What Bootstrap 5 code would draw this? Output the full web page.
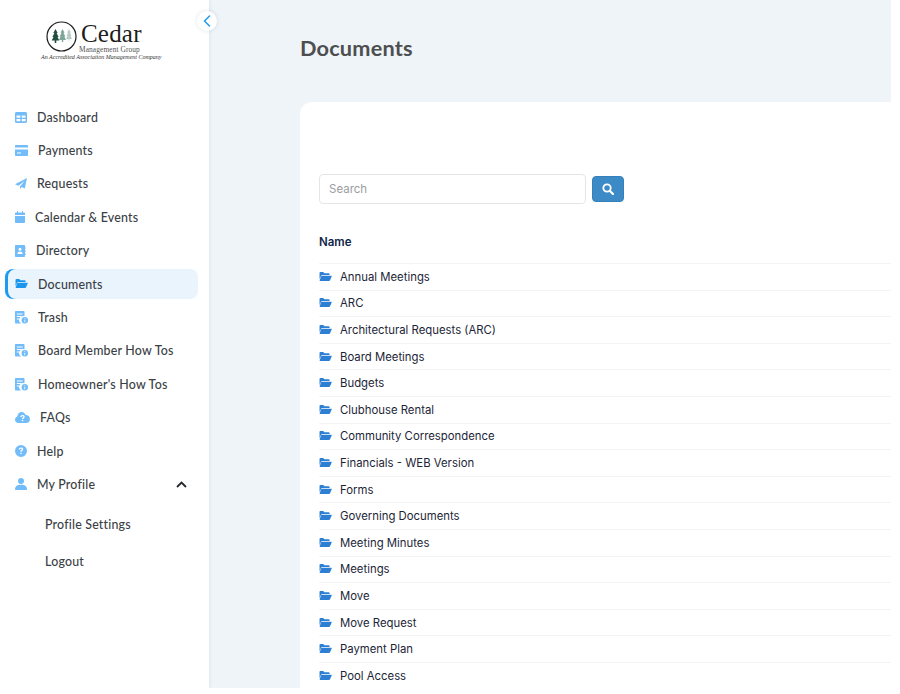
<!DOCTYPE html>
<html lang="en">
<head>
    <meta charset="UTF-8">
    <title>Documents</title>
    <link href="https://cdn.jsdelivr.net/npm/bootstrap@5.3.0/dist/css/bootstrap.min.css" rel="stylesheet">
    <style>
        body { background: #fff; overflow: hidden; font-family: "Inter", sans-serif; }
        .shell { width: 891px; height: 688px; overflow: hidden; background: #eff4f8; }
        .side { width: 209px; flex: none; background: #fff; box-shadow: 1px 0 3px rgba(40, 70, 100, .08); position: relative; font-family: "Lato", sans-serif; }
        .toggle { position: absolute; left: 197px; top: 11px; width: 20px; height: 20px; background: #fff; box-shadow: 0 0 4px rgba(40, 70, 100, .15); }
        .brand { height: 102px; padding: 21px 0 0 46px; }
        .brand-name { font: 25px/16px "Liberation Serif", serif; color: #1d1d1b; letter-spacing: .2px; margin-bottom: 5px; }
        .brand-sub { font: 7.4px/7px "Liberation Serif", serif; color: #555; margin: -6.500px 0 0 33px; letter-spacing: .1px; }
        .brand-tag { font: italic 6px/9px "Liberation Serif", serif; color: #333; white-space: nowrap; margin-left: -5px; }
        .side-nav { padding: 0 11px 0 5px; }
        .side-link { height: 30px; margin-bottom: 3.4px; padding-left: 10px; gap: 10px; color: #3b3f46; font-size: 12.4px; font-weight: 500; letter-spacing: .2px; text-decoration: none; border-radius: 8px; }
        .side-link span { padding-top: 2px; }
        .side-link svg { fill: #72bdf9; flex: none; }
        .side-link.active { background: #e9f4fd; box-shadow: inset 3px 0 0 #1c9af0; }
        .side-link.active svg { fill: #1a96ee; }
        .side-link .caret { margin-right: 11px; }
        .side-sub { height: 37px; padding-left: 40px; color: #3b3f46; font-size: 12.4px; font-weight: 500; letter-spacing: .2px; }
        .side-sub.first { margin-top: 8px; }
        .main { padding: 37px 0 0 91px; min-width: 0; }
        .page-title { font: 700 21.7px/22px "Lato", sans-serif; color: #4d4e50; margin: 0 0 43px; letter-spacing: .2px; }
        .doc-card { background: #fff; border-top-left-radius: 12px; height: 586px; padding: 72px 0 0 19px; }
        .search-box { width: 267px; height: 30px; font-size: 11.5px; border-color: #e3e6e9; border-radius: 4px; padding: 0 9px; }
        .search-box::placeholder { color: #9a9da1; }
        .search-btn { width: 32px; height: 26px; background: #3d8bc6; border: 1px solid #3580ba; border-radius: 4px; padding: 0; margin-left: 6px; }
        .search-btn:hover { background: #3d8bc6; }
        .doc-head { font-size: 11.5px; font-weight: 600; color: #0f2547; padding: 29px 0 12px; border-bottom: 1px solid #f3f4f6; line-height: 18px; }
        .doc-row { height: 26.6px; gap: 8px; padding-top: 1px; font-size: 11.35px; color: #1c2537; border-bottom: 1px solid #f3f4f6; }
        .doc-row svg { fill: #2c7fd3; flex: none; margin-top: -2px; }
    </style>
</head>
<body>
    <svg width="0" height="0" class="d-block">
        <symbol id="i-folder" viewBox="0 0 24 19"><path d="M1 2.500C1 1.700 1.700 1 2.500 1h5.300l2.200 2.300h8c.9 0 1.500.6 1.500 1.500V6.500H6.200c-1.100 0-2 .6-2.400 1.600L1 14.500z"/><path d="M5.400 8h17c.9 0 1.400.8 1 1.600l-3 7c-.3.800-1 1.400-2 1.400H2.300c-.9 0-1.400-.8-1-1.600l2.400-7C4 8.600 4.600 8 5.400 8z"/></symbol>
        <symbol id="i-doc" viewBox="0 0 13 13"><path d="M1 0h7.500c.6 0 1 .4 1 1v4.300A4 4 0 0 0 6.100 12.500H1c-.6 0-1-.4-1-1V1c0-.6.400-1 1-1z"/><circle cx="9.800" cy="9.300" r="3.200"/><path fill="#fff" d="M1.800 2.500h5.800v1H1.800zM1.800 5h4.500v1H1.800zM1.800 7.500h2.800v1H1.800zM9.400 8.800h.8v2.500h-.8zM9.400 7.300h.8v.8h-.8z"/></symbol>
    </svg>

    <div class="shell d-flex">
        <aside class="side">
            <button class="toggle btn rounded-circle border-0 p-0 d-flex align-items-center justify-content-center" type="button" aria-label="Collapse">
                <svg width="8" height="12" viewBox="0 0 8 12" fill="none" stroke="#1c9af0" stroke-width="1.500" stroke-linecap="round" stroke-linejoin="round"><path d="M6.500 1 1.500 6l5 5"/></svg>
            </button>
            <div class="brand">
                <div class="d-flex align-items-center gap-1">
                    <svg width="31" height="31" viewBox="0 0 31 31">
                        <circle cx="15.500" cy="15.500" r="14.500" fill="#fff" stroke="#1d1d1b" stroke-width="1.200"/>
                        <path fill="#b9cdc6" d="M23 8l1.800 3.500h-.9l1.600 3.200h-1l1.500 3.300h-2.500v1.500h-1v-1.500h-2.500l1.500-3.300h-1l1.600-3.200h-.9z"/>
                        <path fill="#7ea597" d="M16.500 8l2 3.800h-1l1.800 3.600h-1l1.700 3.600h-2.800v2h-1.400v-2h-2.800l1.700-3.600h-1l1.800-3.600h-1z"/>
                        <path fill="#234f3f" d="M9.500 8l2.200 4h-1.100l2 4h-1.100l1.800 3.500h-3v2.500h-1.600v-2.500h-3l1.800-3.500H6.400l2-4H7.300z"/>
                    </svg>
                    <span class="brand-name">Cedar</span>
                </div>
                <div class="brand-sub">Management Group</div>
                <div class="brand-tag">An Accredited Association Management Company</div>
            </div>
            <nav class="side-nav">
                <a class="side-link d-flex align-items-center" href="#">
                    <svg width="12" height="11" viewBox="0 0 12 11"><path fill-rule="evenodd" d="M1.500 0h9c.8 0 1.500.7 1.500 1.500v8c0 .8-.7 1.500-1.500 1.500h-9C.7 11 0 10.300 0 9.500v-8C0 .7.700 0 1.500 0zM1.500 3.500v2.200h3.800V3.500zM6.700 3.500v2.200h3.800V3.500zM1.500 7v2.200h3.800V7zM6.700 7v2.200h3.800V7z"/></svg>
                    <span>Dashboard</span>
                </a>
                <a class="side-link d-flex align-items-center" href="#">
                    <svg width="13" height="11" viewBox="0 0 13 11"><path d="M1 0h11c.6 0 1 .4 1 1v1.500H0V1c0-.6.400-1 1-1zM0 4.500h13V10c0 .6-.4 1-1 1H1c-.6 0-1-.4-1-1zM2 7.500v1h4v-1z"/></svg>
                    <span>Payments</span>
                </a>
                <a class="side-link d-flex align-items-center" href="#">
                    <svg width="12" height="12" viewBox="0 0 12 12"><path d="M12 0 9.800 10.500 6.600 9 5 11.500V8.600L10 2.500 3.500 7.800 0 6.300z"/></svg>
                    <span>Requests</span>
                </a>
                <a class="side-link d-flex align-items-center" href="#">
                    <svg width="10" height="12" viewBox="0 0 10 12"><path d="M2 0h1v1.500h4V0h1v1.500h1c.6 0 1 .4 1 1V4H0V2.500c0-.6.400-1 1-1h1zM0 5h10v6c0 .6-.4 1-1 1H1c-.6 0-1-.4-1-1z"/></svg>
                    <span>Calendar &amp; Events</span>
                </a>
                <a class="side-link d-flex align-items-center" href="#">
                    <svg width="11" height="12" viewBox="0 0 11 12"><path fill-rule="evenodd" d="M1 0h8c.6 0 1 .4 1 1v10c0 .6-.4 1-1 1H1c-.6 0-1-.4-1-1V1c0-.6.400-1 1-1zM5 2.800a1.500 1.500 0 1 0 0 3 1.500 1.500 0 0 0 0-3zM2.300 9h5.400c0-1.500-1.200-2.400-2.700-2.400S2.300 7.500 2.300 9z"/><path d="M10.500 2h.5v2h-.5zM10.500 5h.5v2h-.5zM10.500 8h.5v2h-.5z"/></svg>
                    <span>Directory</span>
                </a>
                <a class="side-link active d-flex align-items-center" href="#">
                    <svg width="13" height="11"><use href="#i-folder"/></svg>
                    <span>Documents</span>
                </a>
                <a class="side-link d-flex align-items-center" href="#">
                    <svg width="13" height="13"><use href="#i-doc"/></svg>
                    <span>Trash</span>
                </a>
                <a class="side-link d-flex align-items-center" href="#">
                    <svg width="13" height="13"><use href="#i-doc"/></svg>
                    <span>Board Member How Tos</span>
                </a>
                <a class="side-link d-flex align-items-center" href="#">
                    <svg width="13" height="13"><use href="#i-doc"/></svg>
                    <span>Homeowner's How Tos</span>
                </a>
                <a class="side-link d-flex align-items-center" href="#">
                    <svg width="15" height="11" viewBox="0 0 15 11"><path fill-rule="evenodd" d="M6.500 0c1.900 0 3.400 1.100 4 2.800C13 2.900 15 4.800 15 7.200 15 9.300 13.300 11 11.200 11H3.300C1.500 11 0 9.500 0 7.700 0 6.200 1 5 2.300 4.600 2.600 2 4.300 0 6.500 0zM7.500 3C6.300 3 5.400 3.700 5.300 4.900h1.300c.1-.5.400-.8.900-.8s.8.300.8.700c0 .9-1.500 1-1.500 2.500h1.300c0-1 1.600-1.200 1.600-2.600C9.700 3.700 8.800 3 7.500 3zM6.800 8v1.200h1.400V8z"/></svg>
                    <span>FAQs</span>
                </a>
                <a class="side-link d-flex align-items-center" href="#">
                    <svg width="12" height="12" viewBox="0 0 12 12"><path fill-rule="evenodd" d="M6 0a6 6 0 1 1 0 12A6 6 0 0 1 6 0zM6 2.500C4.800 2.500 3.900 3.200 3.800 4.400h1.300c.1-.5.400-.8.900-.8s.8.300.8.700c0 .9-1.500 1-1.500 2.500h1.300c0-1 1.600-1.200 1.600-2.600C8.200 3.200 7.300 2.500 6 2.500zM5.300 7.700v1.300h1.400V7.700z"/></svg>
                    <span>Help</span>
                </a>
                <a class="side-link d-flex align-items-center" href="#">
                    <svg width="12" height="12" viewBox="0 0 12 12"><circle cx="6" cy="3" r="3"/><path d="M0 11c0-2.800 2.500-4.300 6-4.300s6 1.500 6 4.300c0 .6-.4 1-1 1H1c-.6 0-1-.4-1-1z"/></svg>
                    <span>My Profile</span>
                    <svg class="caret ms-auto" width="11" height="7" viewBox="0 0 11 7"><path d="M1 6l4.500-4.500L10 6" fill="none" stroke="#23262b" stroke-width="1.800"/></svg>
                </a>
                <div class="side-sub first d-flex align-items-center">Profile Settings</div>
                <div class="side-sub d-flex align-items-center">Logout</div>
            </nav>
        </aside>

        <main class="main flex-grow-1">
            <h1 class="page-title">Documents</h1>
            <section class="doc-card">
                <div class="d-flex align-items-center">
                    <input type="text" class="form-control search-box shadow-none" placeholder="Search">
                    <button class="btn search-btn d-flex align-items-center justify-content-center" type="button" aria-label="Search">
                        <svg width="12" height="12" viewBox="0 0 12 12" fill="none" stroke="#fff"><circle cx="5" cy="5" r="3.700" stroke-width="1.800"/><path d="M8 8l3 3" stroke-width="2.200" stroke-linecap="round"/></svg>
                    </button>
                </div>
                <div class="doc-head">Name</div>
                <div id="docRows"></div>
            </section>
        </main>
    </div>

    <script>
        const folders = ['Annual Meetings', 'ARC', 'Architectural Requests (ARC)', 'Board Meetings', 'Budgets',
            'Clubhouse Rental', 'Community Correspondence', 'Financials - WEB Version', 'Forms', 'Governing Documents',
            'Meeting Minutes', 'Meetings', 'Move', 'Move Request', 'Payment Plan', 'Pool Access'];
        document.getElementById('docRows').innerHTML = folders.map(name => `
            <div class="doc-row d-flex align-items-center">
                <svg width="13" height="11"><use href="#i-folder"/></svg>
                <span>${name}</span>
            </div>`).join('');
    </script>
    <script src="https://cdn.jsdelivr.net/npm/bootstrap@5.3.0/dist/js/bootstrap.bundle.min.js"></script>
</body>
</html>
